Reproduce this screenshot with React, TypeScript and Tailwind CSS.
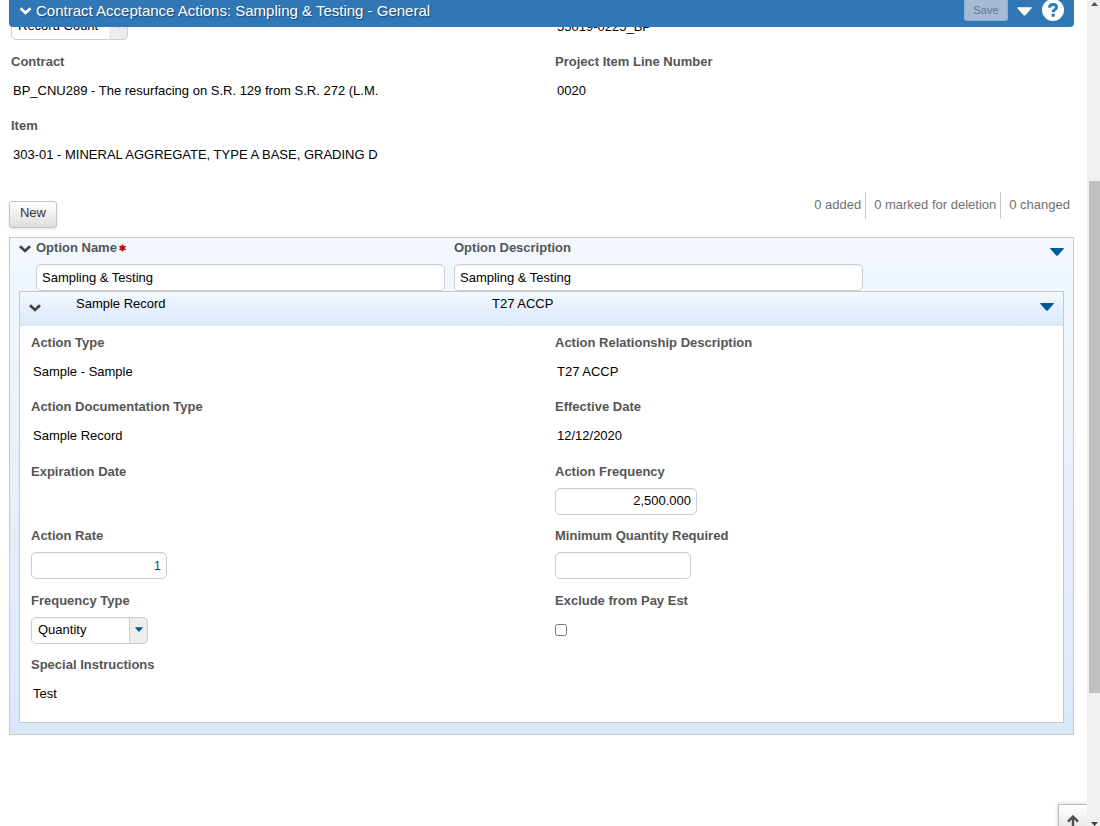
import { useId } from "react";
import type { ReactNode } from "react";

const inputClass =
  "block h-[27px] rounded-[5px] border border-[#c9cdd6] bg-white px-[5px] text-[13px] shadow-[inset_0_1px_1px_rgba(0,0,0,0.06)] focus:outline-none focus:border-[#3077b5]";

function Chevron({ className }: { className: string }) {
  return (
    <svg viewBox="0 0 12 8" className={className} fill="none" stroke="currentColor" strokeWidth="2.7">
      <path d="M1 1.2 L6 6 L11 1.2" />
    </svg>
  );
}

function Caret({ className }: { className: string }) {
  return (
    <svg viewBox="0 0 14 8" className={className} fill="currentColor">
      <path d="M0.6 0 H13.4 Q14.2 0.4 13.6 1 L7.8 7.4 Q7 8.2 6.2 7.4 L0.4 1 Q-0.2 0.4 0.6 0 Z" />
    </svg>
  );
}

function TextField({ label, value }: { label: string; value?: string }) {
  return (
    <dl>
      <dt className="h-5 font-bold leading-[22px] text-[#555]">{label}</dt>
      <dd className="mt-[7px] pl-[2px] leading-[25px] whitespace-nowrap">{value}</dd>
    </dl>
  );
}

function Field({ label, children }: { label: string; children: (id: string) => ReactNode }) {
  const id = useId();
  return (
    <div>
      <label htmlFor={id} className="mb-[7px] block h-5 font-bold leading-[22px] text-[#555]">
        {label}
      </label>
      {children(id)}
    </div>
  );
}

type SelectProps = {
  id?: string;
  label?: string;
  options: string[];
  disabled?: boolean;
};

function Select({ id, label, options, disabled }: SelectProps) {
  return (
    <div className="group relative w-[117px]">
      <select
        id={id}
        aria-label={label}
        disabled={disabled}
        className={`${inputClass} w-full appearance-none pr-6 pb-[2px] pl-[6px] disabled:opacity-100`}
      >
        {options.map((option) => (
          <option key={option}>{option}</option>
        ))}
      </select>
      <span className="pointer-events-none absolute inset-y-0 right-0 flex w-[19px] items-center justify-center rounded-r-[5px] border border-[#c9cdd6] bg-[#ededed] pb-[2px] text-[#005a9c] group-has-disabled:border-l-[#ededed] group-has-disabled:text-[#b5b5b5]">
        <Caret className="h-[5px] w-[8px]" />
      </span>
    </div>
  );
}

function Header() {
  return (
    <header className="relative z-10 flex h-[27px] items-start rounded-b-[4px] bg-[#3077b5] px-[10px] text-white">
      <button aria-label="Collapse" className="mt-[7px]">
        <Chevron className="h-[8px] w-[13px]" />
      </button>
      <h1 className="ml-1 flex-1 text-[15px] leading-[22px] [text-shadow:1px_1px_1px_rgba(0,0,0,0.4)]">
        Contract Acceptance Actions: Sampling &amp; Testing - General
      </h1>
      <button
        disabled
        className="h-[21px] w-11 rounded-b-[3px] border border-t-0 border-[#8fb0d0] bg-[#a3bbd4] text-[11px] text-[#62758c]"
      >
        Save
      </button>
      <button aria-label="Actions" className="mt-[7px] ml-[9px]">
        <Caret className="h-[9px] w-[15px]" />
      </button>
      <button aria-label="Help" className="-mt-px ml-[10px]">
        <svg viewBox="0 0 22 22" className="h-[22px] w-[22px]">
          <circle cx="11" cy="11" r="11" fill="white" />
          <path
            d="M7.4 8.6 Q7.6 5.4 11 5.4 Q14.5 5.4 14.5 8.2 Q14.5 9.8 12.8 10.7 Q11.2 11.6 11.2 13.2"
            fill="none"
            stroke="#3077b5"
            strokeWidth="3"
          />
          <rect x="9.6" y="14.8" width="3.1" height="3" fill="#3077b5" />
        </svg>
      </button>
    </header>
  );
}

function ActionPanel() {
  return (
    <div className="mx-[9px] mb-[11px] border border-[#c8c8c8] bg-white">
      <div className="flex h-[34px] bg-linear-to-b from-[#f3f8ff] to-[#d9e8f9] px-[9px]">
        <button aria-label="Collapse action" className="mt-[12px] self-start">
          <Chevron className="h-[8px] w-[12px] text-[#444]" />
        </button>
        <span className="ml-[35px] w-[416px] leading-[23px]">Sample Record</span>
        <span className="flex-1 leading-[23px]">T27 ACCP</span>
        <button aria-label="Action menu" className="mt-[11px] self-start">
          <Caret className="h-[8px] w-[14px] text-[#005a9c]" />
        </button>
      </div>
      <div className="grid auto-rows-[64px_65px] grid-cols-2 gap-x-4 pt-[6px] pb-[3px] pl-[11px]">
        <TextField label="Action Type" value="Sample - Sample" />
        <TextField label="Action Relationship Description" value="T27 ACCP" />
        <TextField label="Action Documentation Type" value="Sample Record" />
        <TextField label="Effective Date" value="12/12/2020" />
        <TextField label="Expiration Date" />
        <Field label="Action Frequency">
          {(id) => (
            <input id={id} defaultValue="2,500.000" className={`${inputClass} w-[142px] pb-[2px] text-right`} />
          )}
        </Field>
        <Field label="Action Rate">
          {(id) => (
            <input id={id} defaultValue="1" className={`${inputClass} w-[136px] text-right text-[#1d4a7c]`} />
          )}
        </Field>
        <Field label="Minimum Quantity Required">
          {(id) => <input id={id} className={`${inputClass} w-[136px] text-right`} />}
        </Field>
        <Field label="Frequency Type">{(id) => <Select id={id} options={["Quantity"]} />}</Field>
        <Field label="Exclude from Pay Est">
          {(id) => <input id={id} type="checkbox" className="mt-[14px] block h-3 w-3" />}
        </Field>
        <TextField label="Special Instructions" value="Test" />
      </div>
    </div>
  );
}

function OptionPanel() {
  return (
    <section className="mt-[9px] border border-[#c8c8c8] bg-linear-to-b from-[#f3f8ff] to-[#d9e8f9]">
      <div className="flex items-start pl-[9px]">
        <button aria-label="Collapse option" className="mt-[7px]">
          <Chevron className="h-[8px] w-[12px] text-[#444]" />
        </button>
        <div className="ml-[5px] flex flex-1 gap-[9px]">
          <div className="w-[409px]">
            <label htmlFor="option-name" className="mb-[6px] flex h-5 font-bold leading-5 text-[#555]">
              Option Name
              <svg
                viewBox="0 0 8 8"
                className="mt-[6px] ml-[2px] h-[8px] w-[7px] text-[#c00000]"
                stroke="currentColor"
                strokeWidth="2"
              >
                <path d="M4 0 V8 M0.6 2 L7.4 6 M7.4 2 L0.6 6" />
              </svg>
            </label>
            <input id="option-name" defaultValue="Sampling &amp; Testing" className={`${inputClass} w-full`} />
          </div>
          <div className="w-[409px]">
            <label htmlFor="option-description" className="mb-[6px] block h-5 font-bold leading-5 text-[#555]">
              Option Description
            </label>
            <input id="option-description" defaultValue="Sampling &amp; Testing" className={`${inputClass} w-full`} />
          </div>
        </div>
        <button aria-label="Option menu" className="mt-[10px] mr-[9px]">
          <Caret className="h-[8px] w-[14px] text-[#005a9c]" />
        </button>
      </div>
      <ActionPanel />
    </section>
  );
}

function Scrollbar() {
  return (
    <div aria-hidden="true" className="flex w-[13px] shrink-0 flex-col items-center bg-[#f0f0f0] pl-[2px]">
      <svg viewBox="0 0 7 4" className="mt-[2px] h-[4px] w-[7px] fill-[#505050]">
        <path d="M0 4 L3.5 0 L7 4 Z" />
      </svg>
      <div className="mt-[175px] h-[512px] w-full bg-[#c0c0c0]" />
      <svg viewBox="0 0 7 4" className="mt-auto h-[4px] w-[7px] fill-[#404040]">
        <path d="M0 0 L3.5 4 L7 0 Z" />
      </svg>
    </div>
  );
}

export default function App() {
  return (
    <div className="flex h-screen overflow-hidden bg-white font-['Liberation_Sans',Arial,sans-serif] text-[13px] text-black">
      <main className="relative flex-1 overflow-hidden pr-[13px] pl-[9px]">
        <Header />
        {/* this row is scrolled halfway under the header */}
        <div className="-mt-[14px] grid h-[38px] grid-cols-2 items-start gap-x-[25px] pl-[2px]">
          <Select label="Type" options={["Record Count"]} disabled />
          <p className="pl-[2px] leading-[27px]">55019-0225_BP</p>
        </div>
        <div className="grid auto-rows-[64px] grid-cols-2 gap-x-[25px] pl-[2px]">
          <TextField label="Contract" value="BP_CNU289 - The resurfacing on S.R. 129 from S.R. 272 (L.M." />
          <TextField label="Project Item Line Number" value="0020" />
          <TextField label="Item" value="303-01 - MINERAL AGGREGATE, TYPE A BASE, GRADING D" />
        </div>

        <div className="mt-[13px] flex items-start justify-between">
          <button className="mt-[9px] h-[27px] w-12 rounded-[3px] border border-[#c3c3c3] bg-linear-to-b from-white to-[#dedede] pb-[3px] text-[#333] shadow-sm">
            New
          </button>
          <ul className="flex leading-[26px] text-[#707070]">
            <li className="h-[27px] border-r border-[#c8c8c8] pr-1">0 added</li>
            <li className="h-[27px] border-r border-[#c8c8c8] pr-1 pl-2">0 marked for deletion</li>
            <li className="h-[27px] pr-1 pl-2">0 changed</li>
          </ul>
        </div>

        <OptionPanel />

        <button
          aria-label="Back to top"
          className="absolute right-0 -bottom-[10px] flex h-8 w-[29px] justify-center border border-r-0 border-[#bbb] bg-linear-to-b from-white to-[#e2e2e2] pt-[10px] shadow-[0_0_4px_rgba(0,0,0,0.2)]"
        >
          <svg viewBox="0 0 12 13" className="h-[13px] w-[12px]" fill="none" stroke="#505050" strokeWidth="2.4">
            <path d="M6 13 V2 M1 6.6 L6 1.6 L11 6.6" />
          </svg>
        </button>
      </main>
      <Scrollbar />
    </div>
  );
}
